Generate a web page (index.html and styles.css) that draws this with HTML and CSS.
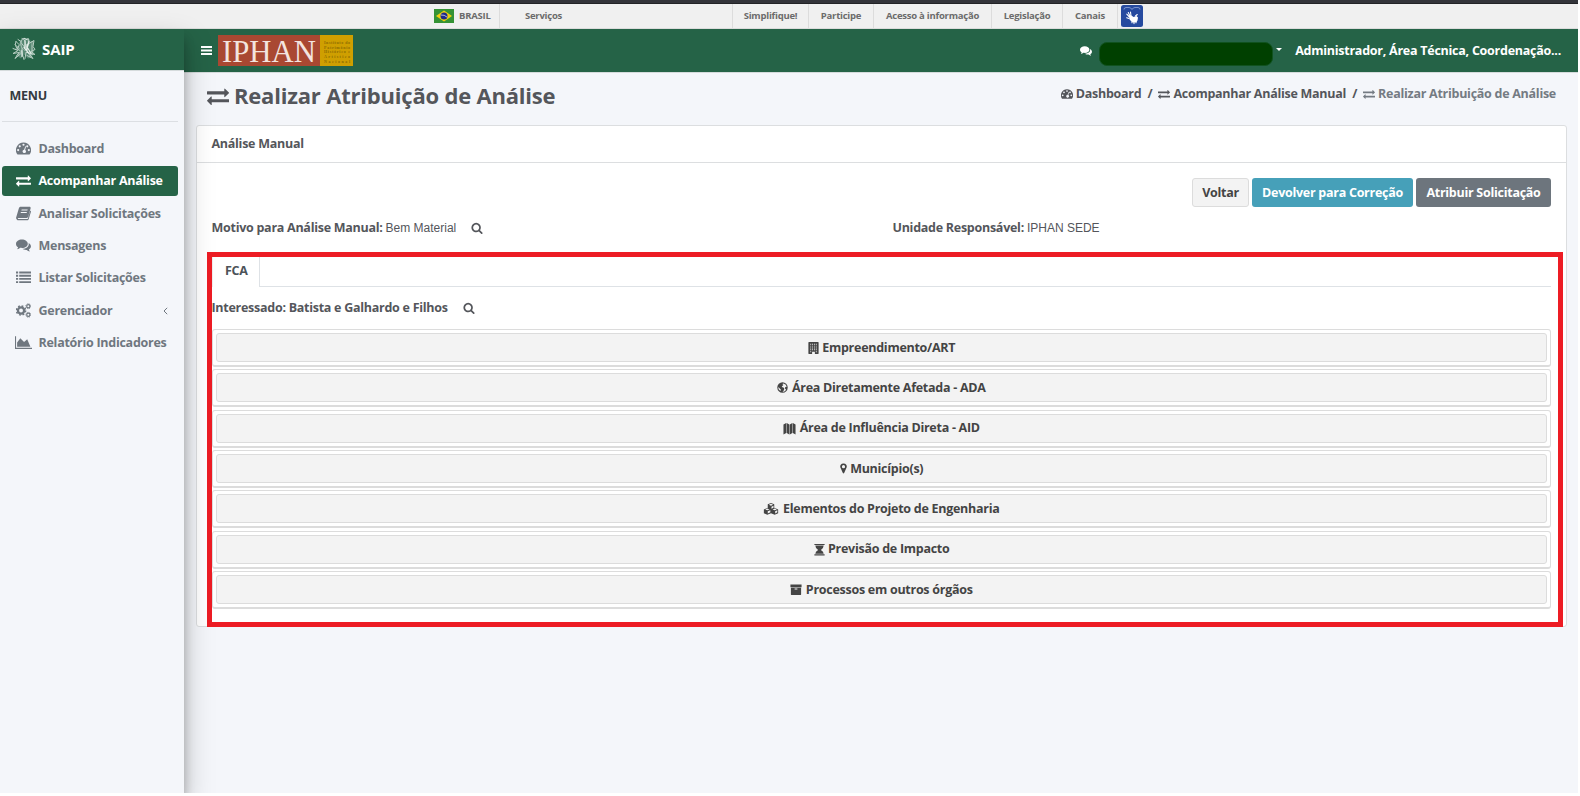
FILE: index.html
```html
<!DOCTYPE html>
<html lang="pt-BR">
<head>
<meta charset="utf-8">
<title>SAIP - Realizar Atribuição de Análise</title>
<link rel="stylesheet" href="styles.css">
</head>
<body>
<svg class="sprite" aria-hidden="true">
  <symbol id="exchange" viewBox="0 0 1792 1792"><path d="M1792 1184v192q0 13-9.5 22.5t-22.500 9.500h-1376v192q0 13-9.500 22.500t-22.500 9.500q-12 0-24-10l-319-320q-9-9-9-22 0-14 9-23l320-320q9-9 23-9 13 0 22.500 9.500t9.500 22.500v192h1376q13 0 22.500 9.500t9.500 22.500zm0-544q0 14-9 23l-320 320q-9 9-23 9-13 0-22.500-9.500t-9.500-22.500v-192h-1376q-13 0-22.500-9.500t-9.500-22.500v-192q0-13 9.500-22.500t22.500-9.500h1376v-192q0-14 9-23t23-9q12 0 24 10l319 319q9 9 9 23z"/></symbol>
  <symbol id="search" viewBox="0 0 1792 1792"><path d="M1216 832q0-185-131.500-316.500t-316.500-131.500-316.500 131.500-131.500 316.500 131.500 316.500 316.500 131.500 316.500-131.500 131.500-316.500zm512 832q0 52-38 90t-90 38q-54 0-90-38l-343-342q-179 124-399 124-143 0-273.500-55.500t-225-150-150-225-55.500-273.500 55.500-273.500 150-225 225-150 273.500-55.500 273.500 55.500 225 150 150 225 55.500 273.500q0 220-124 399l343 343q37 37 37 90z"/></symbol>
  <symbol id="comments" viewBox="0 0 14 14"><path d="M5.500 1.500C2.500 1.500 0 3.300 0 5.500c0 1.300.8 2.400 2 3.200-.2.700-.6 1.200-1 1.700 1.200-.1 2.200-.6 3-1.300 4 .6 7-1.100 7-3.600 0-2.200-2.500-4-5.500-4z"/><path d="M11.700 4.700c.9 2.700-1.700 5.300-5.700 5.400.9.700 2.100 1.200 4 1.100.8.600 1.800 1.200 3 1.300-.4-.5-.8-1-1-1.700 2.600-1.500 2.700-4.600-.3-6.100z"/></symbol>
  <symbol id="dash" viewBox="0 0 14 14"><path fill-rule="evenodd" d="M7 1.500a7 7 0 0 0-6 10.700c.1.200.3.300.5.300h11c.2 0 .4-.1.500-.3A7 7 0 0 0 7 1.500zM7 2.500a1 1 0 1 1 0 2 1 1 0 0 1 0-2zM3.500 4a1 1 0 1 1 0 2 1 1 0 0 1 0-2zM2 7.500a1 1 0 1 1 0 2 1 1 0 0 1 0-2zM12 7.500a1 1 0 1 1 0 2 1 1 0 0 1 0-2zM10.500 4a1 1 0 1 1 0 2 1 1 0 0 1 0-2zM8.700 4.900l.7.200-.9 3.200a1.600 1.600 0 1 1-.9-.2z"/></symbol>
  <symbol id="book" viewBox="0 0 14 14"><path fill-rule="evenodd" d="M4.500.8h8c.9 0 1.400.6 1.100 1.500l-2.200 7.700c-.2.700-.7 1.100-1.400 1.100H2.200c-.5 0-.6.400-.4.700.1.300.4.400.8.400h7.700c.4 0 .7-.2.800-.6L13.300 4.200c.6.300.8.700.6 1.300l-2 6.700c-.2.700-.8 1.200-1.500 1.200H2.300C.9 13.400-.3 11.900.2 10.600L2.700 2.200c.3-.9.900-1.400 1.800-1.400zM5.300 3.300 5 4.300h5.600l.3-1zM4.600 5.600l-.3 1h5.600l.3-1z"/></symbol>
  <symbol id="list" viewBox="0 0 14 14"><path d="M0 1.500h2v1.700H0zM3 1.500h11v1.700H3zM0 4.500h2v1.700H0zM3 4.500h11v1.700H3zM0 7.500h2v1.700H0zM3 7.500h11v1.700H3zM0 10.500h2v1.700H0zM3 10.500h11v1.700H3z"/></symbol>
  <symbol id="cogs" viewBox="0 0 14 14"><g fill="none" stroke="currentColor"><circle cx="4.700" cy="7" r="2.900" stroke-width="2.200"/><circle cx="4.700" cy="7" r="4.300" stroke-width="1.400" stroke-dasharray="1.690 1.690"/><circle cx="11.500" cy="3" r="1.500" stroke-width="1.100"/><circle cx="11.500" cy="3" r="2.300" stroke-width=".8" stroke-dasharray="1 .8"/><circle cx="11.500" cy="11" r="1.500" stroke-width="1.100"/><circle cx="11.500" cy="11" r="2.300" stroke-width=".8" stroke-dasharray="1 .8"/></g></symbol>
  <symbol id="area" viewBox="0 0 16 14"><path d="M0 1h1v11h15v1H0zM2 11V7L5 3 8.500 6.500l3-2.500L14.500 11z"/></symbol>
  <symbol id="building" viewBox="0 0 11 14"><path fill-rule="evenodd" d="M.5 1h10q.5 0 .5.500v12q0 .5-.5.500H7v-2.500H4V14H.5q-.5 0-.5-.5v-12Q0 1 .5 1zM2 3v1h1V3zM4 3v1h1V3zM6 3v1h1V3zM8 3v1h1V3zM2 5v1h1V5zM4 5v1h1V5zM6 5v1h1V5zM8 5v1h1V5zM2 7v1h1V7zM4 7v1h1V7zM6 7v1h1V7zM8 7v1h1V7zM2 9v1h1V9zM4 9v1h1V9zM6 9v1h1V9zM8 9v1h1V9zM2 11v1h1v-1zM8 11v1h1v-1z"/></symbol>
  <symbol id="globe" viewBox="0 0 12 14"><path fill-rule="evenodd" d="M6 1.300a5.700 5.700 0 1 1 0 11.400A5.700 5.700 0 0 1 6 1.300zM7.200 2.600 5.800 3.200 7 4.200 5.800 5.400 5.200 6.500 7 7l1 1.200L7.500 10 6 11.800Q9 11.500 10 9.500L8.700 8 9 6.500l1.600-.3Q10.300 3.600 7.200 2.600zM1.500 6.500Q1.300 8 2 9.300l1.800 1.400.4-1.500L3 8z"/></symbol>
  <symbol id="map" viewBox="0 0 13 14"><path d="M0 2.700 3 1v10.800L0 13.500zM3.500 1l2.800 1.700v10.800l-2.800-1.700zM6.800 2.700 9.600 1v10.800l-2.800 1.700zM10.100 1 13 2.700v10.800l-2.900-1.700z"/></symbol>
  <symbol id="marker" viewBox="0 0 7 14"><path fill-rule="evenodd" d="M3.500 1.500A3.400 3.400 0 0 1 6.700 6.300L4.200 11.800q-.7 1-1.400 0L.3 6.300A3.400 3.400 0 0 1 3.500 1.500zm0 1.800a1.700 1.700 0 1 0 0 3.400 1.700 1.700 0 0 0 0-3.400z"/></symbol>
  <symbol id="cubes" viewBox="0 0 16 14"><path fill-rule="evenodd" d="M8 1l3.500 1.400v3.700L15.700 8v4L12 13.600 8 12l-4 1.600L.3 12V8l4.200-1.900V2.400zM8 2 5.700 3 8 4l2.300-1zM8.500 5v2.300L10.700 6.300V4zM4 7 1.800 8 4 9l2.400-1zM4.500 10v2.300l2.800-1.200V8.900zM12 7 9.700 8l2.300 1 2.300-1zM12.500 10v2.300l2.300-1.200V8.900z"/></symbol>
  <symbol id="hourglass" viewBox="0 0 11 14"><path d="M0 1h11v1.200H0zM1 2.700h9Q10 5.500 7 7.500q3 1.500 3 4H1q0-2.500 3-4-3-2-3-4.800zM0 12h11v1.500H0z"/></symbol>
  <symbol id="archive" viewBox="0 0 12 14"><path fill-rule="evenodd" d="M0 1.500h12v3H0zM.5 5h11v7.500q0 .5-.5.500H1q-.5 0-.5-.5zM4.500 6v1h3V6z"/></symbol>
</svg>

<div class="page">
  <div class="window-edge"></div>
  <div class="govbar">
    <div class="gov-brasil">
      <svg class="flag" viewBox="0 0 20 14"><rect width="20" height="14" fill="#359335"/><path d="M10 1.500 18 7l-8 5.500L2 7z" fill="#f2d00d"/><circle cx="10" cy="7" r="3.500" fill="#1f2a86"/><path d="M6.800 6q3.500-.5 6.400 2.200" stroke="#d9def0" stroke-width=".8" fill="none"/></svg>
      <span>BRASIL</span>
    </div>
    <div class="gov-serv">Serviços</div>
    <div class="gov-link w-simp">Simplifique!</div>
    <div class="gov-link w-part">Participe</div>
    <div class="gov-link w-aces">Acesso à informação</div>
    <div class="gov-link w-legi">Legislação</div>
    <div class="gov-link w-cana">Canais</div>
    <svg class="vlibras" viewBox="0 0 22 22"><rect width="22" height="22" rx="2.500" fill="#264a9f"/><path d="M3 4.500Q3 2.500 5 2.500h3q2 0 3 2 1-2 3-2h3q2 0 2 2" fill="none" stroke="#8fa6da" stroke-width=".8"/><path d="M8.200 11.500 10.500 10.500l2 1.500 3-1 1.500 1.500-.5 3-1 1.500-3 .5-2-1-2-2z" fill="#fff"/><g fill="none" stroke="#fff" stroke-linecap="round" stroke-width="1.100"><path d="M8.500 12 5.800 9.200M9 11 7.300 7.500M10 11 9.500 7M8 13.500l-2.300-.8M11 16.500v1.300M13 17v1.600M15 16.500v1.300M14.500 11l1.800-1.500"/></g></svg>
  </div>

  <div class="shell">
    <aside class="sidebar">
      <div class="brand">
        <svg class="crest" viewBox="0 0 24 24"><path d="M8 4 12 1l6 2 2 6 2 5-2 7-4 1-4-4-3 4-3-2 1-5-4-3 4-4z" fill="#7fa595" opacity=".55"/><g fill="none" stroke="#b9cfc4" stroke-width="1" stroke-linecap="round"><path d="M12 23c-1-4-3-7-2-11M11 13C8 9 8 5 11 2M13 14c3-4 4-8 3-12M8 14C5 13 2 9 4 5M4 5l3 3M1 12l5 2-5 3 6-1-4 6 6-5M7 9 5 13M9 6l3 4M10 2c3 1 4 4 3 8M16 2c2 3 0 6-2 9M17 7l5-3-1 6 2 3-4 2 4 3-6-1 4 5-6-3M14 16l-1 6M18 15v5M6 3l3 2M20 5v13M3 8l4 4M5 19l4-4"/><path d="M13 4v7M15 8v8M10 14v6M12 11l5 6M17 5l-2 7M12 2l3 1M16 12l3 5" stroke="#e5eee9" stroke-width="1.200"/></g></svg>
        <span>SAIP</span>
      </div>
      <div class="menu-title">MENU</div>
      <nav class="menu">
        <a class="item"><svg class="ico"><use href="#dash"/></svg>Dashboard</a>
        <a class="item active"><svg class="ico"><use href="#exchange"/></svg>Acompanhar Análise</a>
        <a class="item"><svg class="ico"><use href="#book"/></svg>Analisar Solicitações</a>
        <a class="item"><svg class="ico"><use href="#comments"/></svg>Mensagens</a>
        <a class="item"><svg class="ico"><use href="#list"/></svg>Listar Solicitações</a>
        <a class="item"><svg class="ico"><use href="#cogs"/></svg>Gerenciador<svg class="angle" viewBox="0 0 5 8"><path d="M4.200.8 1 4l3.200 3.200" fill="none" stroke="currentColor"/></svg></a>
        <a class="item"><svg class="ico wide"><use href="#area"/></svg>Relatório Indicadores</a>
      </nav>
    </aside>

    <div class="main">
      <header class="topbar">
        <svg class="bars" viewBox="0 0 11 9"><path d="M0 0h11v2H0zM0 3.500h11v2H0zM0 7h11v2H0z" fill="#fff"/></svg>
        <svg class="iphan" viewBox="0 0 135 31"><rect width="102" height="31" fill="#a94832"/><rect x="102" width="33" height="31" fill="#cf9f00"/><text class="iphan-name" x="4" y="27" textLength="94" lengthAdjust="spacingAndGlyphs">IPHAN</text><g class="iphan-sub"><text x="106" y="8.500" textLength="26">Instituto do</text><text x="106" y="13.500" textLength="26">Patrimônio</text><text x="106" y="18.200" textLength="26">Histórico e</text><text x="106" y="23" textLength="26">Artístico</text><text x="106" y="28" textLength="26">Nacional</text></g></svg>
        <div class="user">
          <svg class="chat"><use href="#comments"/></svg>
          <span class="redacted"></span>
          <span class="caret"></span>
          <span class="roles">Administrador, Área Técnica, Coordenação...</span>
        </div>
      </header>

      <div class="heading">
        <h1><svg class="h-ico"><use href="#exchange"/></svg><span>Realizar Atribuição de Análise</span></h1>
        <div class="crumbs">
          <svg><use href="#dash"/></svg><span>Dashboard</span><i>/</i><svg><use href="#exchange"/></svg><span>Acompanhar Análise Manual</span><i>/</i><svg class="mute"><use href="#exchange"/></svg><span class="mute">Realizar Atribuição de Análise</span>
        </div>
      </div>

      <section class="card">
        <div class="card-head">Análise Manual</div>
        <div class="card-body">
          <div class="actions">
            <button class="btn b-back">Voltar</button>
            <button class="btn b-info">Devolver para Correção</button>
            <button class="btn b-dark">Atribuir Solicitação</button>
          </div>
          <div class="facts">
            <div><b>Motivo para Análise Manual:</b> <span>Bem Material</span><svg class="lens"><use href="#search"/></svg></div>
            <div><b>Unidade Responsável:</b> <span>IPHAN SEDE</span></div>
          </div>
          <div class="highlight">
            <div class="tabs"><div class="tab">FCA</div></div>
            <div class="owner">Interessado: Batista e Galhardo e Filhos<svg class="lens"><use href="#search"/></svg></div>
            <div class="panels">
              <div class="panel"><button><svg class="w11"><use href="#building"/></svg>Empreendimento/ART</button></div>
              <div class="panel"><button><svg class="w11"><use href="#globe"/></svg>Área Diretamente Afetada - ADA</button></div>
              <div class="panel"><button><svg class="w13"><use href="#map"/></svg>Área de Influência Direta - AID</button></div>
              <div class="panel"><button><svg class="w7"><use href="#marker"/></svg>Município(s)</button></div>
              <div class="panel"><button><svg class="w16"><use href="#cubes"/></svg>Elementos do Projeto de Engenharia</button></div>
              <div class="panel"><button><svg class="w11"><use href="#hourglass"/></svg>Previsão de Impacto</button></div>
              <div class="panel"><button><svg class="w12"><use href="#archive"/></svg>Processos em outros órgãos</button></div>
            </div>
          </div>
        </div>
      </section>
    </div>
  </div>
</div>
</body>
</html>
```
FILE: styles.css
```css
* { box-sizing: border-box; }
body {
  margin: 0;
  background: #fff;
  font: 700 12.5px/20px "Open Sans", "Noto Sans", sans-serif;
  letter-spacing: -.27px;
  color: #54565b;
}
svg { fill: currentColor; display: block; flex: none; }
.sprite { position: absolute; width: 0; height: 0; }
.page {
  width: 1578px;
  height: 793px;
  overflow: hidden;
  background: #f4f6fa;
  display: flex;
  flex-direction: column;
}
.window-edge { height: 4px; background: #33343a; border-bottom: 1px solid #222326; flex: none; }

/* government bar */
.govbar {
  height: 25px;
  flex: none;
  display: flex;
  padding-left: 434px;
  background: #f0f0f0;
  border-bottom: 1px solid #dcdcdc;
  font-size: 9.5px;
  line-height: 23px;
  letter-spacing: -.24px;
  color: #6b6b6b;
  white-space: nowrap;
}
.gov-brasil { width: 66px; display: flex; align-items: center; gap: 5px; border-right: 1px solid #dcdcdc; }
.gov-brasil span { margin-top: -1px; }
.flag { width: 20px; height: 14px; }
.gov-serv { width: 233px; padding-left: 25px; border-right: 1px solid #dcdcdc; }
.gov-link { text-align: center; border-right: 1px solid #dcdcdc; }
.w-simp { width: 76px; }
.w-part { width: 65px; }
.w-aces { width: 118px; }
.w-legi { width: 71px; }
.w-cana { width: 55px; }
.vlibras { width: 22px; height: 22px; margin: 1px 0 0 3px; }

.shell { display: flex; flex: 1; min-height: 0; }

/* sidebar */
.sidebar {
  width: 184px;
  flex: none;
  z-index: 2;
  background: #f4f6fa;
  box-shadow: 0 14px 28px rgba(0,0,0,.25), 0 10px 10px rgba(0,0,0,.22);
}
.brand {
  height: 42px;
  display: flex;
  align-items: center;
  padding: 0 0 0 12px;
  gap: 6px;
  background: #256347;
  border-bottom: 1px solid #d5dbdc;
  color: #fff;
  font-size: 15px;
  letter-spacing: -.1px;
}
.brand span { margin-top: -1px; }
.crest { width: 24px; height: 25px; margin-top: -2px; }
.menu-title {
  height: 51px;
  margin: 0 6px 0 2px;
  padding: 15px 7.500px 0;
  border-bottom: 1px solid #dcdfe3;
  color: #343a40;
}
.menu { padding: 12px 6px 0 2px; display: grid; gap: 2.350px; }
.item {
  height: 30px;
  display: flex;
  align-items: center;
  padding-left: 14px;
  border-radius: 3px;
  color: #6f777f;
  white-space: nowrap;
}
.item.active { background: #256347; color: #fff; }
.ico { width: 15px; height: 15px; margin-right: 7.500px; margin-top: -1px; }
.ico.wide { width: 17px; margin: -1px 6.500px 0 -1px; }
.angle { width: 5px; height: 8px; margin: 0 10px 0 auto; }

/* main area */
.main { flex: 1; min-width: 0; }
.topbar {
  height: 44px;
  display: flex;
  align-items: center;
  background: #256347;
  border-bottom: 1px solid #d5dbdc;
  padding: 0 17px 0 17px;
  color: #fff;
}
.bars { width: 11px; height: 9px; }
.iphan { width: 135px; height: 31px; margin-left: 6px; overflow: visible; letter-spacing: 0; }
.iphan-name { font: 32px "Liberation Serif", serif; fill: #f3e4df; }
.iphan-sub { font: bold 4px "Liberation Serif", serif; fill: #8d6c00; }
.user { margin-left: auto; display: flex; align-items: center; white-space: nowrap; letter-spacing: -.25px; }
.chat { width: 12px; height: 12px; margin: 0 7px 0 0; }
.redacted { width: 174px; height: 24px; margin-top: 6px; border-radius: 8px; background: #004000; border: 1px solid #10521f; }
.caret { border: 3px solid transparent; border-top-color: #fff; border-bottom: 0; margin: -2px 13px 0 3px; }
.heading { height: 52px; display: flex; align-items: flex-start; justify-content: space-between; padding: 0 22px 0 23px; }
h1 { margin: 9px 0 0; display: flex; align-items: center; font-size: 22px; line-height: 27px; font-weight: 700; gap: 5px; letter-spacing: -.2px; }
.h-ico { width: 22px; height: 22px; }
.crumbs { margin-top: 11px; display: flex; align-items: center; white-space: nowrap; }
.crumbs svg { width: 12px; height: 12px; margin-right: 3px; }
.crumbs i { font-style: normal; width: 17px; text-align: center; }
.mute { color: #747b83; }

.card {
  margin: 0 11px 0 12px;
  height: 502px;
  border: 1px solid #dcdee0;
  border-radius: 3px;
  background: #fff;
}
.card-head { height: 37px; padding: 8px 14.500px 0; border-bottom: 1px solid #dcdee0; }
.card-body { padding: 15px 15px 0; }
.actions { display: flex; justify-content: flex-end; gap: 3px; }
.btn { height: 29px; padding: 0; border: 1px solid transparent; border-radius: 3px; font: inherit; letter-spacing: inherit; color: #fff; }
.b-back { width: 57px; background: #f3f3f3; border-color: #dcdcdc; color: #444; }
.b-info { width: 161px; background: #46a0b9; }
.b-dark { width: 135px; background: #6d757d; }
.facts { display: grid; grid-template-columns: 681px 1fr; margin: 11px 0 0 -.5px; height: 34px; }
.facts > div, .owner { display: flex; align-items: center; height: 20px; white-space: pre; }
.facts b { font-weight: inherit; }
.facts span { font: 12px "Liberation Sans", Arial, sans-serif; letter-spacing: 0; margin-left: 3px; }
.lens { width: 12px; height: 12px; margin-left: 15px; }
.highlight { margin: 0 -12px 0 -5px; border: 5px solid #ed1c24; height: 375px; padding-right: 7px; }
.tabs { height: 30px; display: flex; border-bottom: 1px solid #dee2e6; }
.tab { width: 48px; height: 30px; background: #fff; border-right: 1px solid #dee2e6; border-left: 1px solid #eee; padding: 4px 0 0 12px; color: #4d5359; }
.owner { margin-top: 11px; margin-left: -.5px; }
.panels { margin-top: 11px; display: grid; gap: 2.350px; }
.panel { height: 38px; border: 1px solid #dcdcdc; border-bottom-width: 2px; border-radius: 3px; padding: 3px; }
.panel button {
  width: 100%;
  height: 29px;
  display: flex;
  align-items: center;
  justify-content: center;
  gap: 3.500px;
  padding: 0;
  background: #f3f3f3;
  border: 1px solid #dcdcdc;
  border-radius: 3px;
  font: inherit;
  letter-spacing: inherit;
  color: #444;
}
.panel svg { height: 13px; }
.w7 { width: 7px; }
.w11 { width: 11px; }
.w12 { width: 12px; }
.w13 { width: 13px; }
.w16 { width: 16px; }
```
